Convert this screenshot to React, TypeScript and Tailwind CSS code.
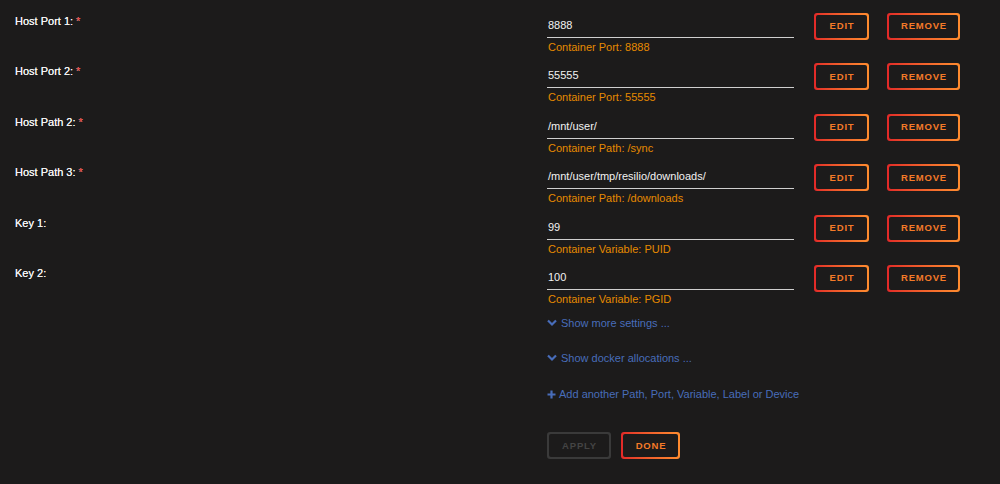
import React from "react";

const rows = [
  { label: "Host Port 1:", req: true, value: "8888", sub: "Container Port: 8888" },
  { label: "Host Port 2:", req: true, value: "55555", sub: "Container Port: 55555" },
  { label: "Host Path 2:", req: true, value: "/mnt/user/", sub: "Container Path: /sync" },
  { label: "Host Path 3:", req: true, value: "/mnt/user/tmp/resilio/downloads/", sub: "Container Path: /downloads" },
  { label: "Key 1:", req: false, value: "99", sub: "Container Variable: PUID" },
  { label: "Key 2:", req: false, value: "100", sub: "Container Variable: PGID" },
];

function GradButton({ text, w, disabled }: { text: string; w: string; disabled?: boolean }) {
  return (
    <div
      className={
        (disabled ? "bg-[#3a3a3a] " : "bg-gradient-to-r from-[#e22828] to-[#ff8c2f] ") +
        "p-[2px] rounded-[3px] h-[27px] " +
        w
      }
    >
      <div
        className={
          "w-full h-full rounded-[2px] bg-[#1c1b1b] flex items-center justify-center text-[9.5px] font-bold tracking-[0.8px] pl-[1px] " +
          (disabled ? "text-[#444]" : "text-[#f47a28]")
        }
      >
        {text}
      </div>
    </div>
  );
}

function Chevron() {
  return (
    <svg width="10" height="8" viewBox="0 0 10 8" className="mr-[4px]">
      <path d="M1 1.5 L5 5.5 L9 1.5" stroke="#486dba" strokeWidth="2.2" fill="none" />
    </svg>
  );
}

function Plus() {
  return (
    <svg width="9" height="9" viewBox="0 0 9 9" className="mr-[3px]">
      <path d="M4.5 0.5 V8.5 M0.5 4.5 H8.5" stroke="#486dba" strokeWidth="2.2" fill="none" />
    </svg>
  );
}

export default function App() {
  return (
    <div
      className="w-[1000px] h-[484px] bg-[#1c1b1b] overflow-hidden pt-[13px]"
      style={{ fontFamily: '"Liberation Sans", Arial, sans-serif' }}
    >
      {rows.map((r, i) => (
        <div key={i} className="flex h-[50.4px]">
          <div className="w-[547px] pl-[15px] text-[11px] text-[#f4f4f4] leading-[16px] [text-shadow:0_0_0.4px_#f4f4f4]">
            {r.label}
            {r.req && <span className="text-[#e22828] ml-[3px]">*</span>}
          </div>
          <div className="w-[247px]">
            <div className="h-[25px] border-b border-[#cfcfcf] text-[11px] text-[#f2f2f2] leading-[24px] pl-[1px]">
              {r.value}
            </div>
            <div className="text-[11px] text-[#e68a00] leading-[16px] pt-[1px] pl-[1px]">{r.sub}</div>
          </div>
          <div className="ml-[20px]">
            <GradButton text="EDIT" w="w-[55px]" />
          </div>
          <div className="ml-[18px]">
            <GradButton text="REMOVE" w="w-[73px]" />
          </div>
        </div>
      ))}
      <div className="pl-[547px] text-[11px] text-[#486dba] leading-[16px]">
        <div className="flex items-center mt-[0px]">
          <Chevron />
          Show more settings ...
        </div>
        <div className="flex items-center mt-[19px]">
          <Chevron />
          Show docker allocations ...
        </div>
        <div className="flex items-center mt-[20px]">
          <Plus />
          Add another Path, Port, Variable, Label or Device
        </div>
        <div className="flex mt-[30px] gap-[10px]">
          <GradButton text="APPLY" w="w-[64px]" disabled />
          <GradButton text="DONE" w="w-[59px]" />
        </div>
      </div>
    </div>
  );
}
